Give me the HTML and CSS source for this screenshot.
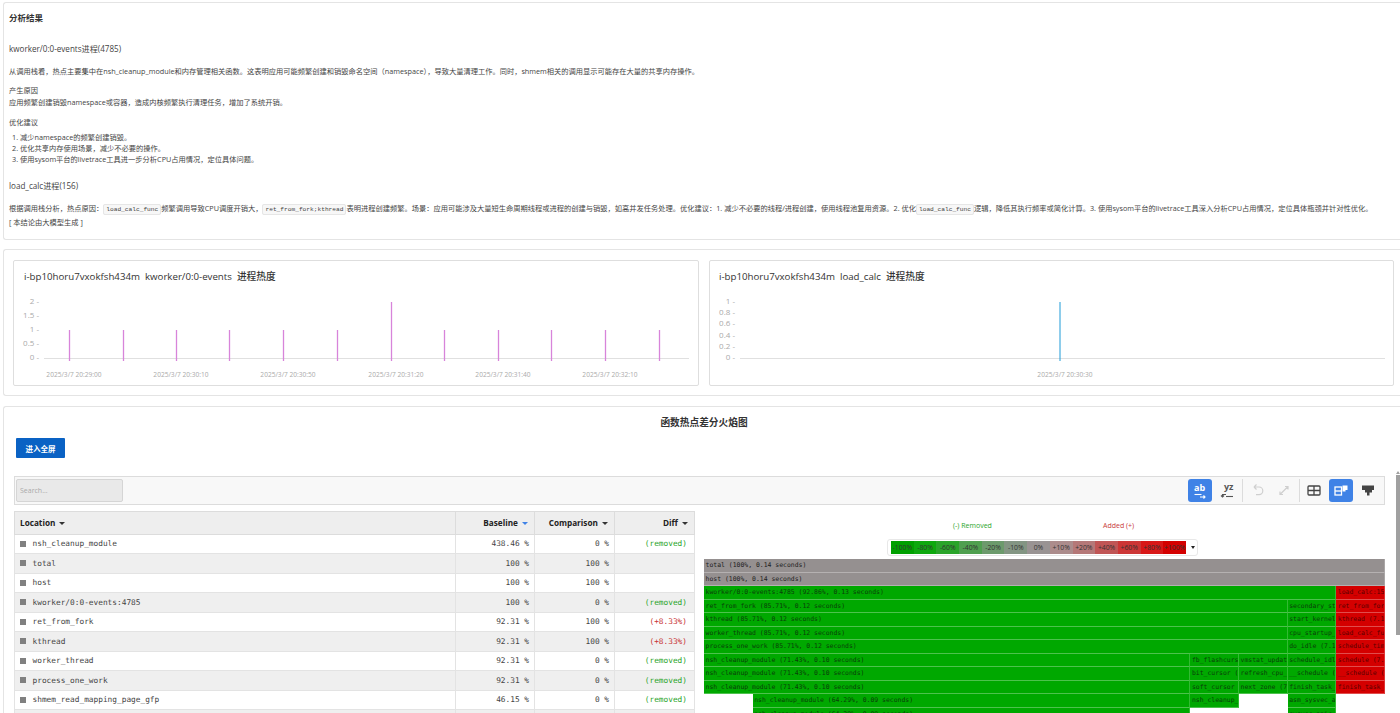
FILE: index.html
```html
<!DOCTYPE html>
<html lang="zh-CN">
<head>
<meta charset="utf-8">
<title>分析结果</title>
<link rel="stylesheet" href="styles.css">
</head>
<body>
<main class="page">
  <section class="panel analysis">
    <h2 class="analysis-title">分析结果</h2>
    <h3 class="proc-title first">kworker/0:0-events进程(4785)</h3>
    <p class="para">从调用栈看，热点主要集中在nsh_cleanup_module和内存管理相关函数。这表明应用可能频繁创建和销毁命名空间（namespace），导致大量清理工作。同时，shmem相关的调用显示可能存在大量的共享内存操作。</p>
    <p class="para gap-a">产生原因<br>应用频繁创建销毁namespace或容器，造成内核频繁执行清理任务，增加了系统开销。</p>
    <p class="para gap-b">优化建议</p>
    <ol class="tips">
      <li>减少namespace的频繁创建销毁。</li>
      <li>优化共享内存使用场景，减少不必要的操作。</li>
      <li>使用sysom平台的livetrace工具进一步分析CPU占用情况，定位具体问题。</li>
    </ol>
    <h3 class="proc-title second">load_calc进程(156)</h3>
    <p class="para wide">根据调用栈分析，热点原因：<code class="code">load_calc_func</code>频繁调用导致CPU调度开销大，<code class="code">ret_from_fork;kthread</code>表明进程创建频繁。场景：应用可能涉及大量短生命周期线程或进程的创建与销毁，如高并发任务处理。优化建议：1. 减少不必要的线程/进程创建，使用线程池复用资源。2. 优化<code class="code">load_calc_func</code>逻辑，降低其执行频率或简化计算。3. 使用sysom平台的livetrace工具深入分析CPU占用情况，定位具体瓶颈并针对性优化。<br>[ 本结论由大模型生成 ]</p>
  </section>

  <section class="panel charts">
    <article class="chart-card">
      <h4 class="chart-title">i-bp10horu7vxokfsh434m&nbsp;&nbsp;kworker/0:0-events&nbsp;&nbsp;进程热度</h4>
      <svg class="chart" viewBox="0 0 684 88" width="684" height="88" aria-label="kworker 进程热度">
        <g class="ticks">
          <text x="25" y="8" text-anchor="end">2 -</text><text x="25" y="22" text-anchor="end">1.5 -</text><text x="25" y="36" text-anchor="end">1 -</text><text x="25" y="50" text-anchor="end">0.5 -</text><text x="25" y="64" text-anchor="end">0 -</text>
        </g>
        <line class="axis" x1="30" y1="62.5" x2="675" y2="62.5"/>
        <g class="bars-a">
          <line x1="55.5" y1="34" x2="55.5" y2="65"/><line x1="109.5" y1="34" x2="109.5" y2="65"/><line x1="162.5" y1="34" x2="162.5" y2="65"/><line x1="215.5" y1="34" x2="215.5" y2="65"/><line x1="269.5" y1="34" x2="269.5" y2="65"/><line x1="323.5" y1="34" x2="323.5" y2="65"/><line x1="377.5" y1="6" x2="377.5" y2="65"/><line x1="430.5" y1="34" x2="430.5" y2="65"/><line x1="484.5" y1="34" x2="484.5" y2="65"/><line x1="537.5" y1="34" x2="537.5" y2="65"/><line x1="591.5" y1="34" x2="591.5" y2="65"/><line x1="645.5" y1="34" x2="645.5" y2="65"/>
        </g>
        <g class="dates">
          <text x="60" y="81" text-anchor="middle">2025/3/7 20:29:00</text><text x="167" y="81" text-anchor="middle">2025/3/7 20:30:10</text><text x="274" y="81" text-anchor="middle">2025/3/7 20:30:50</text><text x="382" y="81" text-anchor="middle">2025/3/7 20:31:20</text><text x="489" y="81" text-anchor="middle">2025/3/7 20:31:40</text><text x="596" y="81" text-anchor="middle">2025/3/7 20:32:10</text>
        </g>
      </svg>
    </article>
    <article class="chart-card second-card">
      <h4 class="chart-title">i-bp10horu7vxokfsh434m&nbsp;&nbsp;load_calc&nbsp;&nbsp;进程热度</h4>
      <svg class="chart" viewBox="0 0 684 88" width="684" height="88" aria-label="load_calc 进程热度">
        <g class="ticks">
          <text x="25" y="8" text-anchor="end">1 -</text><text x="25" y="19" text-anchor="end">0.8 -</text><text x="25" y="30" text-anchor="end">0.6 -</text><text x="25" y="42" text-anchor="end">0.4 -</text><text x="25" y="53" text-anchor="end">0.2 -</text><text x="25" y="64" text-anchor="end">0 -</text>
        </g>
        <line class="axis" x1="30" y1="62.5" x2="675" y2="62.5"/>
        <line class="bar-b" x1="350" y1="6" x2="350" y2="65"/>
        <text class="date-b" x="355" y="81" text-anchor="middle">2025/3/7 20:30:30</text>
      </svg>
    </article>
  </section>

  <section class="panel flame">
    <h3 class="flame-title">函数热点差分火焰图</h3>
    <button class="fullscreen" type="button">进入全屏</button>
    <div class="toolbar">
      <input class="search" type="text" placeholder="Search...">
      <div class="tools">
        <span class="tool active"><svg viewBox="0 0 24 23" width="24" height="23"><text class="ab" x="6" y="12">ab</text><path d="M6.500 15.500h7" class="stroke-white"/><path d="M12 18h5m-1.500-1.500L17 18l-1.500 1.500" class="stroke-white"/></svg></span>
        <span class="tool"><svg viewBox="0 0 24 23" width="24" height="23"><text class="yz" x="9" y="11">yz</text><path d="M11 15.500H7.500V18m-1.500-1.500L7.500 18 9 16.500" class="stroke-dark"/><path d="M11 17.500h7" class="stroke-dark"/></svg></span>
        <span class="sep"></span>
        <span class="tool"><svg viewBox="0 0 24 23" width="24" height="23"><path d="M9 8h5a3.800 3.800 0 0 1 0 7.600h-3M9 8l2.500-2.500M9 8l2.500 2.500" class="stroke-faint"/></svg></span>
        <span class="tool"><svg viewBox="0 0 24 23" width="24" height="23"><path d="M8 15.500 16 7.500m-3 0h3v3M8 12.500v3h3" class="stroke-faint"/></svg></span>
        <span class="sep"></span>
        <span class="tool"><svg viewBox="0 0 24 23" width="24" height="23"><rect x="6" y="7" width="12" height="9" rx="1" class="stroke-dark2"/><path d="M6 11.500h12M12 7v9" class="stroke-dark2"/></svg></span>
        <span class="tool active"><svg viewBox="0 0 24 23" width="24" height="23"><rect x="6" y="8" width="6.500" height="8" class="stroke-white2"/><path d="M6 12h6.500" class="stroke-white2"/><path d="M13.500 6.500h5v4.500h-2v1.500h-3z" fill="#fff"/></svg></span>
        <span class="tool"><svg viewBox="0 0 24 23" width="24" height="23"><path d="M6 6.500h12v4.500h-2v2.500h-2.500v3h-2.500v-3H9V11H6z" fill="#444"/></svg></span>
      </div>
    </div>
    <div class="split">
      <table class="data">
        <thead>
          <tr><th class="loc">Location <i class="caret"></i></th><th>Baseline <i class="caret blue"></i></th><th>Comparison <i class="caret"></i></th><th>Diff <i class="caret"></i></th></tr>
        </thead>
        <tbody>
          <tr><td class="loc"><i class="sq"></i>nsh_cleanup_module</td><td>438.46 %</td><td>0 %</td><td class="rem">(removed)</td></tr>
          <tr><td class="loc"><i class="sq"></i>total</td><td>100 %</td><td>100 %</td><td></td></tr>
          <tr><td class="loc"><i class="sq"></i>host</td><td>100 %</td><td>100 %</td><td></td></tr>
          <tr><td class="loc"><i class="sq"></i>kworker/0:0-events:4785</td><td>100 %</td><td>0 %</td><td class="rem">(removed)</td></tr>
          <tr><td class="loc"><i class="sq"></i>ret_from_fork</td><td>92.31 %</td><td>100 %</td><td class="add">(+8.33%)</td></tr>
          <tr><td class="loc"><i class="sq"></i>kthread</td><td>92.31 %</td><td>100 %</td><td class="add">(+8.33%)</td></tr>
          <tr><td class="loc"><i class="sq"></i>worker_thread</td><td>92.31 %</td><td>0 %</td><td class="rem">(removed)</td></tr>
          <tr><td class="loc"><i class="sq"></i>process_one_work</td><td>92.31 %</td><td>0 %</td><td class="rem">(removed)</td></tr>
          <tr><td class="loc"><i class="sq"></i>shmem_read_mapping_page_gfp</td><td>46.15 %</td><td>0 %</td><td class="rem">(removed)</td></tr>
          <tr><td class="loc">&nbsp;</td><td></td><td></td><td></td></tr>
        </tbody>
      </table>
      <div class="graph">
        <div class="legend-labels"><span class="lab-rem">(-) Removed</span><span class="lab-add">Added (+)</span></div>
        <div class="scale-box">
          <div class="scale">
            <span class="s1">-100%</span><span class="s2">-80%</span><span class="s3">-60%</span><span class="s4">-40%</span><span class="s5">-20%</span><span class="s6">-10%</span><span class="s7">0%</span><span class="s8">+10%</span><span class="s9">+20%</span><span class="s10">+40%</span><span class="s11">+60%</span><span class="s12">+80%</span><span class="s13">+100%</span>
          </div>
          <i class="scale-caret"></i>
        </div>
        <div class="frames">
          <div class="f gray w14">total (100%, 0.14 seconds)</div>
          <div class="f gray w14">host (100%, 0.14 seconds)</div>
          <div class="f green w13">kworker/0:0-events:4785 (92.86%, 0.13 seconds)</div><div class="f red w1">load_calc:15</div>
          <div class="f green w12">ret_from_fork (85.71%, 0.12 seconds)</div><div class="f green w1">secondary_st</div><div class="f red w1">ret_from_for</div>
          <div class="f green w12">kthread (85.71%, 0.12 seconds)</div><div class="f green w1">start_kernel</div><div class="f red w1">kthread (7.1</div>
          <div class="f green w12">worker_thread (85.71%, 0.12 seconds)</div><div class="f green w1">cpu_startup_</div><div class="f red w1">load_calc_fu</div>
          <div class="f green w12">process_one_work (85.71%, 0.12 seconds)</div><div class="f green w1">do_idle (7.1</div><div class="f red w1">schedule_tim</div>
          <div class="f green w10">nsh_cleanup_module (71.43%, 0.10 seconds)</div><div class="f green w1">fb_flashcurs</div><div class="f green w1">vmstat_updat</div><div class="f green w1">schedule_idl</div><div class="f red w1">schedule (7.</div>
          <div class="f green w10">nsh_cleanup_module (71.43%, 0.10 seconds)</div><div class="f green w1">bit_cursor (</div><div class="f green w1">refresh_cpu_</div><div class="f green w1">__schedule (</div><div class="f red w1">__schedule (</div>
          <div class="f green w10">nsh_cleanup_module (71.43%, 0.10 seconds)</div><div class="f green w1">soft_cursor</div><div class="f green w1">next_zone (7</div><div class="f green w1">finish_task_</div><div class="f red w1">finish_task_</div>
          <div class="f blank w1"></div><div class="f green w9">nsh_cleanup_module (64.29%, 0.09 seconds)</div><div class="f green w1">nsh_cleanup_</div><div class="f blank w1"></div><div class="f green w1">asm_sysvec_a</div><div class="f blank w1"></div>
          <div class="f blank w1"></div><div class="f green w9">nsh_cleanup_module (64.29%, 0.09 seconds)</div><div class="f blank w2"></div><div class="f green w1">sysvec_apic</div><div class="f blank w1"></div>
        </div>
      </div>
    </div>
  </section>
</main>
<div class="scroll-thumb"></div>
</body>
</html>
```
FILE: styles.css
```css
* { box-sizing: border-box; }
html, body { margin: 0; height: 713px; overflow: hidden; background: #fff; }
body { font-family: "Open Sans", "Noto Sans CJK SC", sans-serif; font-size: 7.250px; color: #444; }
.page { padding: 2px 0 0 3px; width: 1400px; }
.panel { border: 1px solid #e4e4e4; border-right: 0; border-radius: 3px 0 0 3px; background: #fff; width: 1397px; }

.analysis { height: 238px; padding: 9px 5px 0 5px; }
.analysis-title { margin: 0; font-size: 8.500px; line-height: 12px; font-weight: 700; color: #333; }
.proc-title { margin: 0; font-size: 8.100px; line-height: 12px; font-weight: 400; color: #444; }
.proc-title.first { margin-top: 19px; }
.proc-title.second { margin-top: 15.500px; }
.para { margin: 10.500px 0 0; line-height: 11px; white-space: nowrap; }
.para.gap-a { margin-top: 7.500px; line-height: 12px; }
.para.gap-b { margin-top: 8.500px; }
.para.wide { margin-top: 10px; line-height: 12px; }
.tips { margin: 4px 0 0; padding: 0 0 0 11px; line-height: 11px; }
.code { font-family: "Liberation Mono", monospace; font-size: 6.200px; background: #f7f7f7; border: 1px solid #e6e6e6; border-radius: 2px; padding: 1px 2px; }

.charts { margin-top: 9px; height: 147px; padding: 10px 0 0 9px; display: flex; gap: 10px; }
.chart-card { width: 686px; height: 126px; border: 1px solid #dedede; border-radius: 2px; padding: 0; flex: none; }
.chart-title { margin: 0; padding: 9px 0 0 10px; height: 27px; font-size: 9.700px; line-height: 14px; font-weight: 500; color: #333; }
.second-card { width: 685px; }
.second-card .chart-title { padding-left: 9px; }
.chart { display: block; margin-top: 8px; overflow: visible; }
.ticks text { font-size: 8px; fill: #aaa; }
.dates text, .date-b { font-size: 6.600px; fill: #aaa; }
.axis { stroke: #e0e0e0; stroke-width: 1; }
.bars-a line { stroke: #d884da; stroke-width: 1.300; }
.bar-b { stroke: #1f9bd8; stroke-width: 1; }

.flame { margin-top: 10px; height: 320px; padding: 9px 0 0 10px; }
.flame-title { margin: 0; padding-right: 6px; text-align: center; font-size: 9.700px; line-height: 14px; font-weight: 700; color: #333; }
.fullscreen { display: block; margin: 8px 0 0 2px; width: 49px; height: 20px; padding: 0; border: 0; border-radius: 1px; background: #0a62c4; color: #fff; font: 700 7.500px "Noto Sans CJK SC", sans-serif; }
.toolbar { margin-top: 18px; width: 1371px; height: 29px; border: 1px solid #dcdcdc; background: #f8f8f8; display: flex; justify-content: space-between; align-items: center; padding: 0 4px 0 1px; }
.search { width: 107px; height: 23px; border: 1px solid #d5d5d5; border-radius: 2px; background: #e9e9e9; padding: 0 3px; font-size: 7px; font-family: "Open Sans", sans-serif; }
.search::placeholder { color: #aaa; }
.tools { display: flex; align-items: center; gap: 3px; }
.tool { width: 24px; height: 23px; border-radius: 3px; display: block; }
.tool svg { display: block; }
.tool.active { background: #3f82e6; }
.sep { width: 1px; height: 23px; background: #dcdcdc; margin: 0 -0.500px; }
.ab { font: 700 9px "Open Sans", sans-serif; fill: #fff; }
.yz { font: 700 9px "Open Sans", sans-serif; fill: #555; }
.stroke-white, .stroke-dark, .stroke-faint, .stroke-dark2, .stroke-white2 { fill: none; }
.stroke-white { stroke: #fff; stroke-width: 1.100; }
.stroke-dark { stroke: #555; stroke-width: 1.100; }
.stroke-faint { stroke: #cfcfcf; stroke-width: 1.200; }
.stroke-dark2 { stroke: #444; stroke-width: 1.300; }
.stroke-white2 { stroke: #fff; stroke-width: 1.300; }

.split { margin: 6px 0 0 -1px; display: flex; gap: 9px; align-items: flex-start; }
.data { width: 680px; margin-left: 1px; flex: none; border-collapse: collapse; table-layout: fixed; font-family: "DejaVu Sans Mono", monospace; font-size: 7.800px; color: #444; }
.data th { height: 22.500px; background: #eee; border: 1px solid #dcdcdc; font: 700 8.200px "Open Sans", sans-serif; color: #222; text-align: right; padding: 0 6px; white-space: nowrap; }
.data th:first-child { width: 441px; }
.data th:nth-child(2) { width: 79px; }
.data th:nth-child(3) { width: 80px; }
.data th:nth-child(4) { width: 80px; }
.data th.loc, .data td.loc { text-align: left; padding-left: 5px; }
.data td { height: 19.500px; padding: 0 5px; text-align: right; border: 1px solid #e3e3e3; border-width: 0 1px 1px; white-space: nowrap; }
.data td.rem, .data td.add { padding-right: 7px; }
.data tbody tr:nth-child(even) td { background: #efefef; }
.sq { display: inline-block; width: 6px; height: 6px; background: #808080; margin-right: 6.500px; vertical-align: -0.500px; }
.caret { display: inline-block; width: 0; height: 0; border: 3px solid transparent; border-top: 3.500px solid #333; border-bottom: 0; margin-left: 2px; vertical-align: 1.500px; }
.caret.blue { border-top-color: #3f82e6; }
.rem { color: #2aa52a; }
.add { color: #c83232; }

.graph { width: 681px; flex: none; }
.legend-labels { height: 28px; font-size: 7px; display: flex; padding: 9px 0 0 249px; line-height: 11px; }
.lab-rem { color: #2ba52b; width: 150px; }
.lab-add { color: #c83a3a; }
.scale-box { margin: 0 0 3px 183px; width: 311px; height: 17px; border: 1px solid #e8e8e8; border-radius: 3px; display: flex; align-items: center; padding-left: 3px; }
.scale { width: 295px; height: 13px; display: flex; font-size: 6.800px; line-height: 13px; color: #333; text-align: center; }
.scale span { flex: 1; }
.s1 { background: #00a000; } .s2 { background: #0ea80e; } .s3 { background: #2aa42a; } .s4 { background: #4f9f4f; }
.s5 { background: #6c9a6c; } .s6 { background: #839583; } .s7 { background: #999393; } .s8 { background: #ac8c8c; }
.s9 { background: #b57878; } .s10 { background: #c05555; } .s11 { background: #cc3636; } .s12 { background: #d81818; } .s13 { background: #d40000; }
.scale-caret { margin-left: 5px; width: 0; height: 0; border: 2.500px solid transparent; border-top: 3px solid #222; border-bottom: 0; }
.frames { display: grid; grid-template-columns: repeat(14, minmax(0, 1fr)); grid-auto-rows: 13.500px; font-family: "DejaVu Sans Mono", monospace; font-size: 6.450px; line-height: 13px; color: #222; }
.f { overflow: hidden; white-space: nowrap; padding-left: 1.500px; border-bottom: 1px solid rgba(255,255,255,.3); border-right: 1px solid rgba(255,255,255,.2); }
.gray { background: #959090; }
.green { background: #00a800; color: #0a3f0a; }
.red { background: #d40000; color: #5a0000; }
.blank { background: transparent; border: 0; }
.w1 { grid-column: span 1; } .w2 { grid-column: span 2; } .w9 { grid-column: span 9; } .w10 { grid-column: span 10; }
.w12 { grid-column: span 12; } .w13 { grid-column: span 13; } .w14 { grid-column: span 14; }

.scroll-thumb { position: fixed; right: 0; top: 475px; width: 4px; height: 160px; background: #a0a0a0; }
.scroll-thumb::before { content: ""; position: absolute; left: 0; top: -4px; border: 2px solid transparent; border-bottom: 3px solid #a0a0a0; border-top: 0; }
```
